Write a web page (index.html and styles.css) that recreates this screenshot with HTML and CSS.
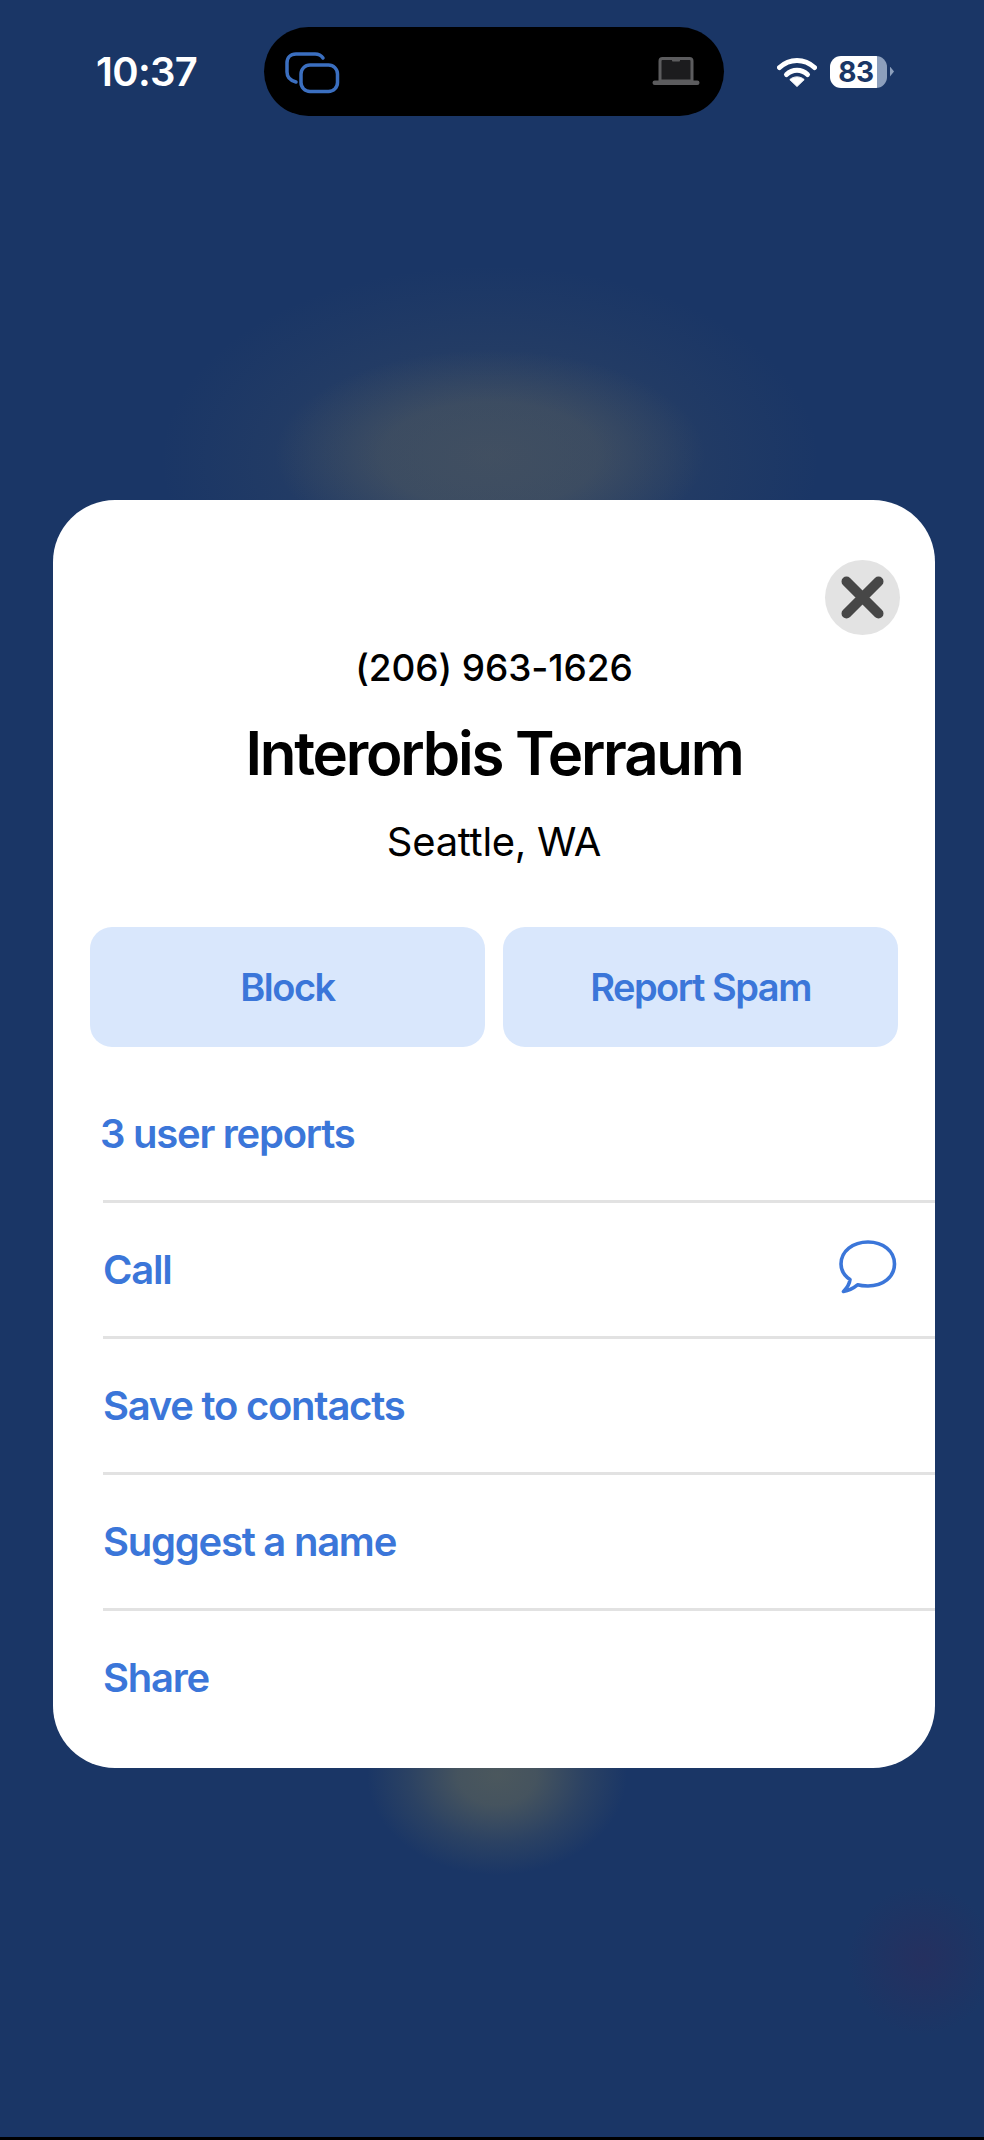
FILE: index.html
```html
<!DOCTYPE html>
<html lang="en">
<head>
<meta charset="utf-8">
<title>Caller details</title>
<link rel="stylesheet" href="styles.css">
</head>
<body>
<div class="screen">
  <header class="status">
    <span class="time">10:37</span>
    <div class="island">
      <svg class="i-windows" viewBox="0 0 56 43" aria-hidden="true"><path d="M38 6C36 3 34 2 30 2H11C5.500 2 2 5.500 2 11V20C2 25 5 28.500 11 30"/><rect x="16" y="13" width="36.500" height="26.500" rx="9"/></svg>
      <svg class="i-laptop" viewBox="0 0 48 29" aria-hidden="true"><path class="lap-screen" d="M8 24V4C8 2.500 9 1.500 10.500 1.500H37.500C39 1.500 40 2.500 40 4V24Z"/><path class="lap-notch" d="M20 2H28V3.500C28 4.200 27.500 4.500 27 4.500H21C20.500 4.500 20 4.200 20 3.500Z"/><rect class="lap-base" x="0.500" y="23.500" width="47" height="4.500" rx="2.200"/></svg>
    </div>
    <div class="indicators">
      <svg class="i-wifi" viewBox="0 0 40 30" aria-hidden="true"><path class="arc" d="M2.500 10.500C12.500 1 27.500 1 37.500 10.500"/><path class="arc" d="M9.500 17.500C15.500 11.800 24.500 11.800 30.500 17.500"/><path class="dot" d="M20 29.500L12.800 22.600C16.800 19 23.200 19 27.200 22.600Z"/></svg>
      <div class="battery"><span class="battery-level">83</span></div>
      <span class="battery-cap"></span>
    </div>
  </header>

  <main class="stage">
    <section class="card">
      <button class="close" type="button" aria-label="Close">
        <svg viewBox="0 0 75 75" aria-hidden="true"><path d="M21.500 21.500L53.500 53.500M53.500 21.500L21.500 53.500"/></svg>
      </button>
      <div class="caller">
        <p class="phone">(206) 963-1626</p>
        <h1 class="name">Interorbis Terraum</h1>
        <p class="place">Seattle, WA</p>
      </div>
      <div class="actions">
        <button class="action" type="button">Block</button>
        <button class="action" type="button">Report Spam</button>
      </div>
      <ul class="rows">
        <li class="row row-first">3 user reports</li>
        <li class="row">Call
          <svg class="i-bubble" viewBox="0 0 58 54" aria-hidden="true"><path d="M4.500 51.500C10 50.500 14 48.500 18.500 44.800C21.500 45.700 25 46 29 46C44 46 55.500 37 55.500 24C55.500 11 44 2 29 2C14 2 2 11 2 24C2 30 5 35.500 11 39.500C10.500 44 8 48 4.500 51.500Z"/></svg>
        </li>
        <li class="row">Save to contacts</li>
        <li class="row">Suggest a name</li>
        <li class="row">Share</li>
      </ul>
    </section>
  </main>
  <div class="edge"></div>
</div>
</body>
</html>
```
FILE: styles.css
```css
* { box-sizing: border-box; }
html, body { margin: 0; padding: 0; }
body { font-family: Inter, "Noto Sans", sans-serif; }

.screen {
  width: 984px;
  height: 2140px;
  display: flex;
  flex-direction: column;
  overflow: hidden;
  background-color: #1a3666;
  background-image:
    radial-gradient(ellipse 75px 75px at 922px 1960px, rgba(80, 25, 70, .2), rgba(80, 25, 70, 0)),
    radial-gradient(ellipse 130px 100px at 497px 1775px, rgba(120, 118, 85, .52) 0, rgba(120, 118, 85, .46) 30%, rgba(120, 118, 85, .18) 68%, rgba(120, 118, 85, 0) 100%),
    radial-gradient(ellipse 215px 105px at 490px 455px, rgba(120, 115, 90, .3) 0, rgba(120, 115, 90, .27) 50%, rgba(120, 115, 90, 0) 100%),
    radial-gradient(ellipse 330px 195px at 490px 460px, rgba(120, 115, 90, .16) 0, rgba(120, 115, 90, .1) 55%, rgba(120, 115, 90, 0) 100%);
}

.status {
  display: flex;
  align-items: center;
  height: 116px;
  padding-top: 27px;
  color: #fff;
}
.time {
  width: 264px;
  padding-left: 96px;
  font-size: 40px;
  font-weight: 600;
  line-height: 89px;
  letter-spacing: -.7px;
}
.island {
  width: 460px;
  height: 89px;
  border-radius: 45px;
  background: #000;
  display: flex;
  align-items: center;
  justify-content: space-between;
  padding: 0 24px 0 21px;
}
.i-windows { width: 56px; height: 43px; margin-top: 4px; fill: none; stroke: #3b6fc0; stroke-width: 3.500; stroke-linecap: round; }
.i-laptop { width: 48px; height: 29px; margin-top: -1px; }
.lap-screen { fill: #1c1c1e; stroke: #5c5c5e; stroke-width: 3; }
.lap-notch, .lap-base { fill: #5c5c5e; }

.indicators {
  display: flex;
  align-items: center;
  padding-left: 53px;
}
.i-wifi { width: 40px; height: 30px; margin-right: 13px; }
.arc { fill: none; stroke: #fff; stroke-width: 5; stroke-linecap: round; }
.dot { fill: #fff; stroke: #fff; stroke-width: 1; stroke-linejoin: round; }
.battery {
  width: 57px;
  height: 32px;
  border-radius: 11px;
  background: linear-gradient(90deg, #fff 0, #fff 83%, #8c9fbc 83%, #8c9fbc 100%);
  display: flex;
  align-items: center;
  justify-content: center;
  padding-right: 5px;
}
.battery-level { color: #1a3666; font-size: 28px; font-weight: 700; line-height: 1; letter-spacing: -.3px; }
.battery-cap {
  width: 4px;
  height: 10px;
  margin-left: 3px;
  background: #8c9fbc;
  clip-path: polygon(0 0, 100% 50%, 0 100%);
}

.stage { flex: 1; padding: 384px 49px 0 53px; }

.card {
  position: relative;
  height: 1268px;
  border-radius: 62px;
  background: #fff;
  padding-top: 143px;
}
.close {
  position: absolute;
  top: 60px;
  right: 35px;
  width: 75px;
  height: 75px;
  padding: 0;
  border: 0;
  border-radius: 50%;
  background: #e3e3e3;
}
.close svg { display: block; width: 75px; height: 75px; fill: none; stroke: #474747; stroke-width: 10; stroke-linecap: round; }

.caller { text-align: center; color: #000; }
.phone { margin: 0; font-size: 37px; line-height: 50px; font-weight: 500; letter-spacing: -.1px; }
.name { margin: 22px 0 0; font-size: 60px; line-height: 76px; font-weight: 600; letter-spacing: -2.250px; }
.place { margin: 26px 0 0; font-size: 40px; line-height: 50px; font-weight: 400; letter-spacing: -.3px; }

.actions {
  display: flex;
  gap: 18px;
  margin: 60px 37px 0;
}
.action {
  flex: 1;
  height: 120px;
  border: 0;
  border-radius: 22px;
  background: #d9e7fc;
  color: #3b76d9;
  font-family: inherit;
  font-size: 38px;
  font-weight: 600;
  letter-spacing: -1.500px;
}

.rows { list-style: none; margin: 18px 0 0 50px; padding: 0; color: #3b76d9; font-size: 40px; font-weight: 600; letter-spacing: -1.250px; }
.row {
  display: flex;
  align-items: center;
  justify-content: space-between;
  height: 136px;
  border-top: 3px solid #e2e2e2;
  padding-right: 38px;
}
.row-first { height: 135px; border-top: 0; padding-top: 2px; margin-left: -3px; }
.i-bubble { width: 58px; height: 54px; margin-bottom: 6px; fill: none; stroke: #3b76d9; stroke-width: 3.600; stroke-linejoin: round; }

.edge { height: 3px; background: #000; }
```
